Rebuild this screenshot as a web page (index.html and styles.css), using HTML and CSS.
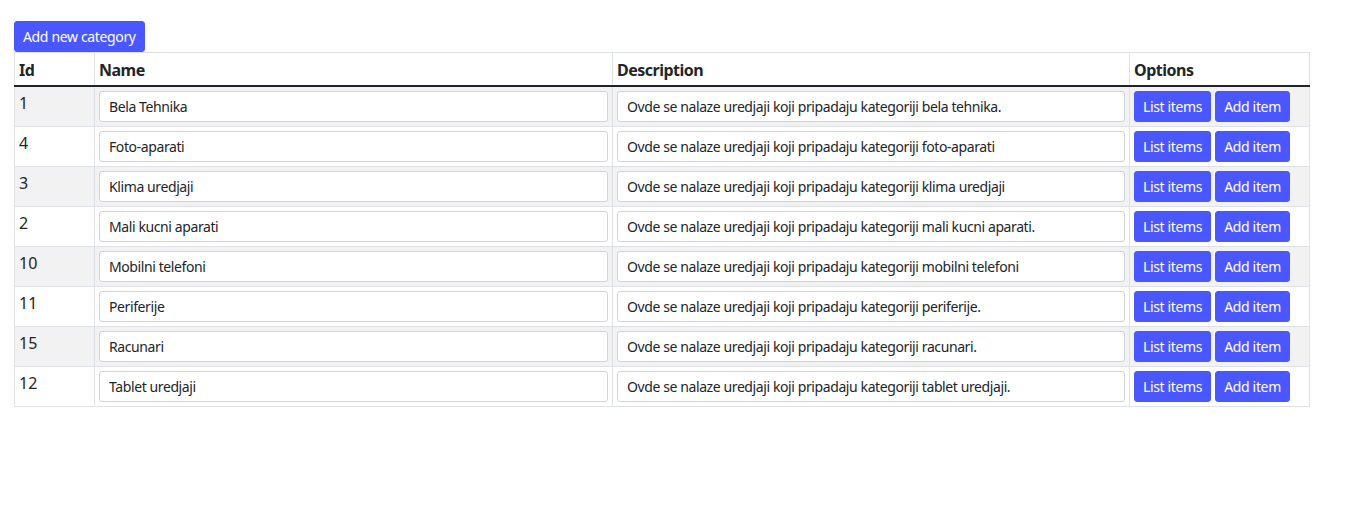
FILE: index.html
```html
<!DOCTYPE html>
<html>
<head>
<meta charset="utf-8">
<link rel="stylesheet" href="styles.css">
</head>
<body>
<div class="page">
  <button class="btn">Add new category</button>
  <table class="tbl">
    <thead>
      <tr>
        <th class="c-id">Id</th>
        <th class="c-name">Name</th>
        <th class="c-desc">Description</th>
        <th class="c-opt">Options</th>
      </tr>
    </thead>
    <tbody>
      <tr><td>1</td><td><input class="inp" value="Bela Tehnika"></td><td><input class="inp" value="Ovde se nalaze uredjaji koji pripadaju kategoriji bela tehnika."></td><td><div class="opts"><button class="btn">List items</button><button class="btn">Add item</button></div></td></tr>
      <tr><td>4</td><td><input class="inp" value="Foto-aparati"></td><td><input class="inp" value="Ovde se nalaze uredjaji koji pripadaju kategoriji foto-aparati"></td><td><div class="opts"><button class="btn">List items</button><button class="btn">Add item</button></div></td></tr>
      <tr><td>3</td><td><input class="inp" value="Klima uredjaji"></td><td><input class="inp" value="Ovde se nalaze uredjaji koji pripadaju kategoriji klima uredjaji"></td><td><div class="opts"><button class="btn">List items</button><button class="btn">Add item</button></div></td></tr>
      <tr><td>2</td><td><input class="inp" value="Mali kucni aparati"></td><td><input class="inp" value="Ovde se nalaze uredjaji koji pripadaju kategoriji mali kucni aparati."></td><td><div class="opts"><button class="btn">List items</button><button class="btn">Add item</button></div></td></tr>
      <tr><td>10</td><td><input class="inp" value="Mobilni telefoni"></td><td><input class="inp" value="Ovde se nalaze uredjaji koji pripadaju kategoriji mobilni telefoni"></td><td><div class="opts"><button class="btn">List items</button><button class="btn">Add item</button></div></td></tr>
      <tr><td>11</td><td><input class="inp" value="Periferije"></td><td><input class="inp" value="Ovde se nalaze uredjaji koji pripadaju kategoriji periferije."></td><td><div class="opts"><button class="btn">List items</button><button class="btn">Add item</button></div></td></tr>
      <tr><td>15</td><td><input class="inp" value="Racunari"></td><td><input class="inp" value="Ovde se nalaze uredjaji koji pripadaju kategoriji racunari."></td><td><div class="opts"><button class="btn">List items</button><button class="btn">Add item</button></div></td></tr>
      <tr><td>12</td><td><input class="inp" value="Tablet uredjaji"></td><td><input class="inp" value="Ovde se nalaze uredjaji koji pripadaju kategoriji tablet uredjaji."></td><td><div class="opts"><button class="btn">List items</button><button class="btn">Add item</button></div></td></tr>
    </tbody>
  </table>
</div>
</body>
</html>
```
FILE: styles.css
```css
* { box-sizing: border-box; }
body {
  margin: 0;
  font-family: "Noto Sans", "Open Sans", sans-serif;
  color: #212529;
  background: #fff;
  font-size: 16px;
  line-height: 1.5;
}
.page {
  padding: 21px 14px;
}
.btn {
  display: inline-block;
  height: 31px;
  padding: 0 8px;
  font-family: inherit;
  font-size: 14px;
  letter-spacing: -0.35px;
  line-height: 29px;
  color: #fff;
  background: #4a57ff;
  border: 1px solid #4a57ff;
  border-radius: 3px;
  cursor: pointer;
  vertical-align: top;
}
.tbl {
  width: 1295px;
  border-collapse: collapse;
  table-layout: fixed;
}
.tbl th, .tbl td {
  border: 1px solid #dee2e6;
  padding: 4px;
  text-align: left;
  vertical-align: top;
}
.tbl th {
  font-weight: 700;
  letter-spacing: -0.5px;
  border-bottom: 2px solid #212529;
  padding: 5px 4px 3px;
}
.c-id { width: 80px; }
.c-name { width: 518px; }
.c-desc { width: 517px; }
.c-opt { width: 180px; }
.tbl tbody tr:nth-child(odd) td { background: #f2f2f2; }
.tbl td {
  height: 40px;
  padding: 4px;
}
.inp {
  display: block;
  width: 100%;
  height: 31px;
  padding: 0 9px;
  font-family: inherit;
  font-size: 14px;
  letter-spacing: -0.4px;
  color: #212529;
  background: #fff;
  border: 1px solid #ced4da;
  border-radius: 3px;
}
.opts {
  display: flex;
  gap: 4px;
}
```
